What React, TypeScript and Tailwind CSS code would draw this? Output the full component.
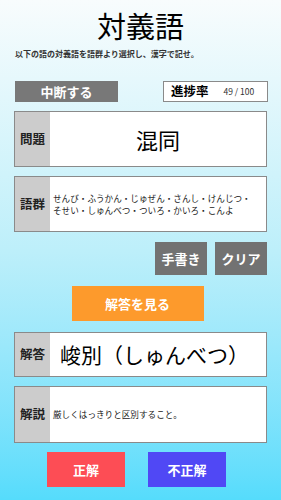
import React from "react";

const jp = "font-['Noto_Sans_CJK_JP',sans-serif]";

function Row({ label, children, h }: { label: string; children: React.ReactNode; h: string }) {
  return (
    <div className={`mx-[14px] flex ${h} border border-[#8a8a8a] bg-white`}>
      <div className="flex w-[35px] shrink-0 items-center justify-center bg-[#cccccc] text-[12.5px] font-bold text-[#222]">
        {label}
      </div>
      <div className="flex flex-1 items-center">{children}</div>
    </div>
  );
}

export default function App() {
  return (
    <div className={`${jp} flex h-[500px] w-[281px] flex-col bg-gradient-to-b from-[#f8fcfd] via-[#bdeffa] to-[#55dcfc] text-black`}>
      {/* Title */}
      <div className="mt-[11px] text-center text-[29px] leading-none">対義語</div>
      <p className="ml-[15px] mt-[10px] text-[8px] leading-none font-bold text-[#333]">
        以下の語の対義語を語群より選択し、漢字で記せ。
      </p>

      {/* Quit + progress */}
      <div className="mt-[23px] flex items-center justify-between pl-[15px] pr-[13px]">
        <button className="flex h-[21px] w-[103px] items-center justify-center bg-[#787878] text-[13px] font-bold text-white">
          中断する
        </button>
        <div className="flex h-[21px] w-[105px] items-center border border-[#8a8a8a] bg-white pl-[7px]">
          <span className="text-[12.5px] font-bold">進捗率</span>
          <span className="ml-[15px] text-[8.5px] text-[#333]">49 / 100</span>
        </div>
      </div>

      {/* Question */}
      <div className="mt-[9px]">
        <Row label="問題" h="h-[56px]">
          <div className="w-full text-center text-[22px]">混同</div>
        </Row>
      </div>

      {/* Word bank */}
      <div className="mt-[9px]">
        <Row label="語群" h="h-[56px]">
          <div className="flex flex-col pl-[3px] text-[8.6px] leading-[12px] text-[#222]">
            <span>せんび・ふうかん・じゅぜん・さんし・けんじつ・</span>
            <span>そせい・しゅんべつ・ついろ・かいろ・こんよ</span>
          </div>
        </Row>
      </div>

      {/* Handwriting / clear */}
      <div className="mt-[10px] flex justify-end gap-[8px] pr-[14px]">
        <button className="flex h-[33px] w-[52px] items-center justify-center bg-[#727272] text-[13px] font-bold text-white">
          手書き
        </button>
        <button className="flex h-[33px] w-[52px] items-center justify-center bg-[#727272] text-[13px] font-bold text-white">
          クリア
        </button>
      </div>

      {/* Show answer */}
      <div className="mt-[11px] flex justify-center pr-[6px]">
        <button className="flex h-[35px] w-[132px] items-center justify-center bg-[#fd9a2c] text-[13px] font-bold text-white">
          解答を見る
        </button>
      </div>

      {/* Answer */}
      <div className="mt-[11px]">
        <Row label="解答" h="h-[45px]">
          <div className="pl-[10px] text-[21px]">峻別（しゅんべつ）</div>
        </Row>
      </div>

      {/* Explanation */}
      <div className="mt-[9px]">
        <Row label="解説" h="h-[57px]">
          <div className="pl-[3px] text-[8.6px] text-[#222]">厳しくはっきりと区別すること。</div>
        </Row>
      </div>

      {/* Judge */}
      <div className="mt-[9px] flex justify-center gap-[23px] pr-[8px]">
        <button className="flex h-[35px] w-[78px] items-center justify-center bg-[#fd4d55] text-[13px] font-bold text-white">
          正解
        </button>
        <button className="flex h-[35px] w-[78px] items-center justify-center bg-[#5048f5] text-[13px] font-bold text-white">
          不正解
        </button>
      </div>
    </div>
  );
}
